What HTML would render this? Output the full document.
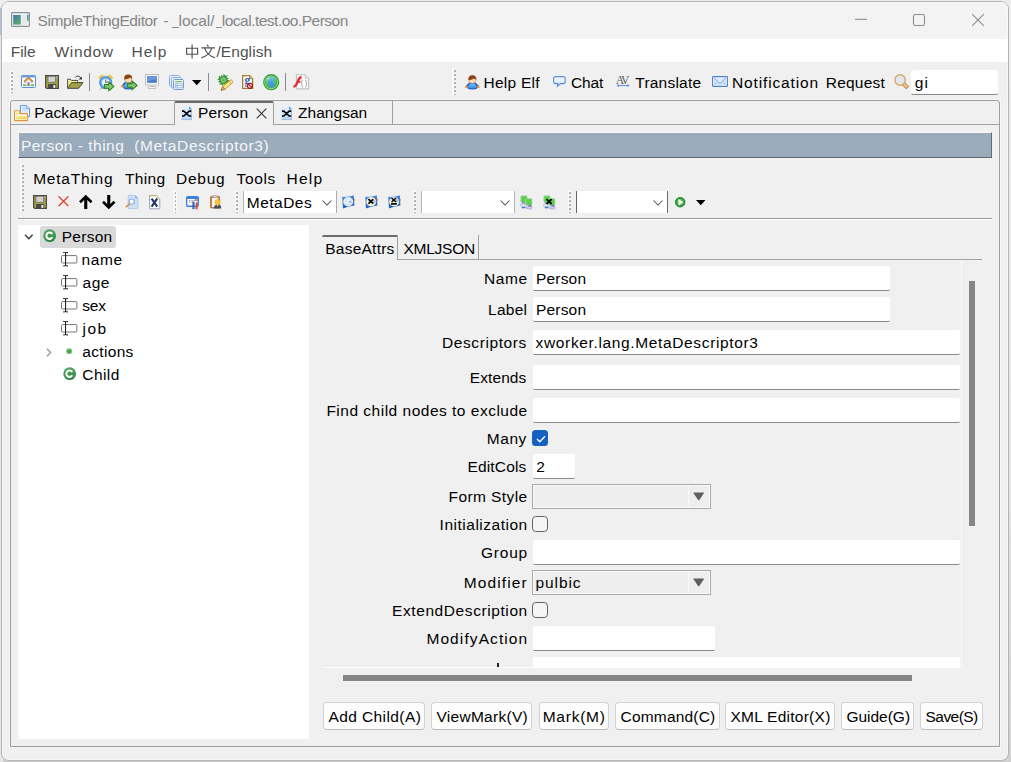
<!DOCTYPE html>
<html><head><meta charset="utf-8"><title>SimpleThingEditor</title>
<style>
html,body{margin:0;padding:0;}
body{width:1011px;height:762px;overflow:hidden;position:relative;background:#fff;font-family:"Liberation Sans",sans-serif;}
div,span.t,svg{position:absolute;box-sizing:border-box;}
span.t{white-space:pre;}
svg{overflow:visible;}
</style></head><body>
<div style="left:0;top:0;width:1011px;height:762px;background:linear-gradient(180deg,#eeeeee 0%,#e6e6e6 60%,#d0d0d0 100%);"></div>
<div style="left:0;top:35px;width:3px;height:727px;background:#e6e6e6;"></div>
<div style="left:0;top:8px;width:2px;height:27px;background:#b2bfe8;"></div>
<div style="left:1px;top:1px;width:1008px;height:760px;background:#f0f0f0;border:1px solid #b4b4b4;border-radius:8px;overflow:hidden;"><div style="left:0;top:0;width:1008px;height:36.7px;background:#f3f3f3;"></div><div style="left:0;top:36.7px;width:1008px;height:23.3px;background:#fff;"></div></div>
<div style="left:2px;top:2px;width:1006px;height:758px;border:1px solid rgba(255,255,255,.45);border-radius:7px;"></div>
<div style="left:172.4px;top:27.3px;width:6.3px;height:1.1px;background:#8c8c8c;"></div>
<div style="left:215.7px;top:27.3px;width:6.2px;height:1.1px;background:#8c8c8c;"></div>
<svg style="left:850px;top:8px" width="140" height="24" viewBox="0 0 140 24" fill="none" stroke="#8c8c8c" stroke-width="1.1"><path d="M5 11.3H17"/><rect x="63.5" y="6.5" width="11" height="11" rx="1.8"/><path d="M122.2 6.2L133.8 17.8M133.8 6.2L122.2 17.8"/></svg>
<div style="left:9.65px;top:71.15px;width:3.2px;height:21.450000000000003px;background:repeating-linear-gradient(180deg,#fcfcfc 0,#fcfcfc 2.8px,transparent 2.8px,transparent 4px);"></div>
<div style="left:11.25px;top:71.75px;width:1.5px;height:21.450000000000003px;background:repeating-linear-gradient(180deg,transparent 0,transparent .3px,#b0b0b0 .4px,#b0b0b0 1.9px,transparent 2px,transparent 4px);"></div>
<div style="left:452.45px;top:69.05000000000001px;width:3.2px;height:25.549999999999997px;background:repeating-linear-gradient(180deg,#fcfcfc 0,#fcfcfc 2.8px,transparent 2.8px,transparent 4px);"></div>
<div style="left:454.04999999999995px;top:69.65px;width:1.5px;height:25.549999999999997px;background:repeating-linear-gradient(180deg,transparent 0,transparent .3px,#b0b0b0 .4px,#b0b0b0 1.9px,transparent 2px,transparent 4px);"></div>
<div style="left:88.9px;top:73px;width:1.2px;height:18px;background:#8c8c8c;"></div>
<div style="left:208px;top:73px;width:1.2px;height:18px;background:#8c8c8c;"></div>
<div style="left:284.9px;top:73px;width:1.2px;height:18px;background:#8c8c8c;"></div>
<div style="left:911px;top:70px;width:87px;height:24.6px;background:#fff;border-bottom:1px solid #868686;border-radius:3px 3px 2px 2px;"></div>
<div style="left:10px;top:100px;width:990px;height:647px;border:1px solid #9e9e9e;border-radius:3px 3px 0 0;box-shadow:0 0 0 1px rgba(255,255,255,.45);"></div>
<div style="left:10px;top:124px;width:990px;height:1px;background:#a0a0a0;"></div>
<div style="left:174px;top:100.5px;width:100px;height:24.5px;background:#f0f0f0;border:1px solid #a0a0a0;border-bottom:none;border-top:2.5px solid #6a6a6a;border-radius:2px 2px 0 0;"></div>
<div style="left:392px;top:101px;width:1px;height:23px;background:#a0a0a0;"></div>
<svg style="left:256px;top:108px" width="11" height="11" viewBox="0 0 11 11" stroke="#333" stroke-width="1.1" fill="none"><path d="M0.7 0.7L10.3 10.3M10.3 0.7L0.7 10.3"/></svg>
<div style="left:18px;top:132px;width:974px;height:26px;background:#9aabbc;border-top:1px solid #f9f9f9;border-left:1px solid #f9f9f9;border-bottom:1.2px solid #60666e;border-right:1px solid #666c74;"></div>
<div style="left:20.45px;top:163.9px;width:3.2px;height:48.5px;background:repeating-linear-gradient(180deg,#fcfcfc 0,#fcfcfc 2.8px,transparent 2.8px,transparent 4px);"></div>
<div style="left:22.049999999999997px;top:164.5px;width:1.5px;height:48.5px;background:repeating-linear-gradient(180deg,transparent 0,transparent .3px,#b0b0b0 .4px,#b0b0b0 1.9px,transparent 2px,transparent 4px);"></div>
<div style="left:173.35000000000002px;top:191.15px;width:3.2px;height:21.25px;background:repeating-linear-gradient(180deg,#fcfcfc 0,#fcfcfc 2.8px,transparent 2.8px,transparent 4px);"></div>
<div style="left:174.95000000000002px;top:191.75px;width:1.5px;height:21.25px;background:repeating-linear-gradient(180deg,transparent 0,transparent .3px,#b0b0b0 .4px,#b0b0b0 1.9px,transparent 2px,transparent 4px);"></div>
<div style="left:234.60000000000002px;top:191.15px;width:3.2px;height:21.25px;background:repeating-linear-gradient(180deg,#fcfcfc 0,#fcfcfc 2.8px,transparent 2.8px,transparent 4px);"></div>
<div style="left:236.20000000000002px;top:191.75px;width:1.5px;height:21.25px;background:repeating-linear-gradient(180deg,transparent 0,transparent .3px,#b0b0b0 .4px,#b0b0b0 1.9px,transparent 2px,transparent 4px);"></div>
<div style="left:412.65000000000003px;top:191.15px;width:3.2px;height:21.25px;background:repeating-linear-gradient(180deg,#fcfcfc 0,#fcfcfc 2.8px,transparent 2.8px,transparent 4px);"></div>
<div style="left:414.25px;top:191.75px;width:1.5px;height:21.25px;background:repeating-linear-gradient(180deg,transparent 0,transparent .3px,#b0b0b0 .4px,#b0b0b0 1.9px,transparent 2px,transparent 4px);"></div>
<div style="left:567.75px;top:191.15px;width:3.2px;height:21.25px;background:repeating-linear-gradient(180deg,#fcfcfc 0,#fcfcfc 2.8px,transparent 2.8px,transparent 4px);"></div>
<div style="left:569.35px;top:191.75px;width:1.5px;height:21.25px;background:repeating-linear-gradient(180deg,transparent 0,transparent .3px,#b0b0b0 .4px,#b0b0b0 1.9px,transparent 2px,transparent 4px);"></div>
<div style="left:243.3px;top:191px;width:93.6px;height:22px;background:#fff;border-left:1px solid #b4b4b4;border-right:1.2px solid #adadad;"></div>
<svg style="left:321.59999999999997px;top:199.6px" width="10" height="6" viewBox="0 0 10 6" fill="none" stroke="#505050" stroke-width="1.05"><path d="M0.5 0.5L5 5L9.5 0.5"/></svg>
<div style="left:421.3px;top:191px;width:93.6px;height:22px;background:#fff;border-left:1px solid #b4b4b4;border-right:1.2px solid #b4b4b4;"></div>
<svg style="left:499.59999999999997px;top:199.6px" width="10" height="6" viewBox="0 0 10 6" fill="none" stroke="#505050" stroke-width="1.05"><path d="M0.5 0.5L5 5L9.5 0.5"/></svg>
<div style="left:575.8px;top:191px;width:92.4px;height:22px;background:#fff;border-left:1px solid #666;border-right:1.2px solid #6a6a6a;"></div>
<svg style="left:652.9px;top:199.6px" width="10" height="6" viewBox="0 0 10 6" fill="none" stroke="#505050" stroke-width="1.05"><path d="M0.5 0.5L5 5L9.5 0.5"/></svg>
<div style="left:18px;top:217.9px;width:974px;height:1.1px;background:#9a9a9a;"></div>
<div style="left:18px;top:219px;width:974px;height:1px;background:#fdfdfd;"></div>
<div style="left:18px;top:225px;width:291px;height:514px;background:#fff;"></div>
<div style="left:39.5px;top:225.5px;width:76px;height:22px;background:#d9d9d9;border-radius:3px;"></div>
<svg style="left:24px;top:234px" width="10" height="6" viewBox="0 0 10 6" fill="none" stroke="#333" stroke-width="1.3"><path d="M1 0.8L4.8 4.8L8.6 0.8"/></svg>
<svg style="left:46px;top:348px" width="6" height="9" viewBox="0 0 6 9" fill="none" stroke="#969696" stroke-width="1.3"><path d="M1 0.8L4.6 4.5L1 8.2"/></svg>
<div style="left:322px;top:259px;width:660px;height:1px;background:#a0a0a0;"></div>
<div style="left:322.4px;top:235.2px;width:76.1px;height:24.8px;background:#f0f0f0;border-top:2.7px solid #6c6c6c;border-right:1px solid #a0a0a0;border-radius:2px 1px 0 0;"></div>
<div style="left:478px;top:235px;width:1px;height:24px;background:#a0a0a0;"></div>
<div style="left:961px;top:260px;width:1px;height:407px;background:#fafafa;"></div>
<div style="left:969px;top:281px;width:6px;height:245px;background:#858585;"></div>
<div style="left:343px;top:675px;width:569px;height:6px;background:#858585;"></div>
<div style="left:533px;top:266px;width:357px;height:24.5px;background:#fff;border-bottom:1px solid #8a8a8a;border-radius:2px;"></div>
<div style="left:533px;top:297px;width:357px;height:24.5px;background:#fff;border-bottom:1px solid #8a8a8a;border-radius:2px;"></div>
<div style="left:533px;top:330px;width:427px;height:25px;background:#fff;border-bottom:1px solid #8a8a8a;border-radius:2px;"></div>
<div style="left:533px;top:365px;width:427px;height:25px;background:#fff;border-bottom:1px solid #8a8a8a;border-radius:2px;"></div>
<div style="left:533px;top:398px;width:427px;height:25px;background:#fff;border-bottom:1px solid #8a8a8a;border-radius:2px;"></div>
<div style="left:532.1px;top:430.3px;width:15.8px;height:15.7px;background:#1560c0;border-radius:3.5px;"></div><svg style="left:535.5px;top:434.5px" width="10" height="8" viewBox="0 0 10 8" fill="none" stroke="#fff" stroke-width="1.3"><path d="M1 4L3.8 6.8L9 1.2"/></svg>
<div style="left:533px;top:453.5px;width:42px;height:25px;background:#fff;border-bottom:1px solid #8a8a8a;border-radius:2px;"></div>
<div style="left:532.3px;top:484px;width:178.6px;height:25px;background:#eeeeee;border:1px solid #a9a9b0;box-shadow:inset 0 0 0 1px #f9f9f9;"></div>
<div style="left:687.9px;top:486px;width:1px;height:21px;background:#f9f9f9;"></div>
<svg style="left:693.1px;top:492.2px" width="11.4" height="8.6" viewBox="0 0 11.4 8.6"><path d="M1 0.4H10.4Q11.4 0.4 10.8 1.3L6.3 8Q5.7 8.7 5.1 8L0.6 1.3Q0 0.4 1 0.4Z" fill="#5e5e5e"/></svg>
<div style="left:532.2px;top:516.0999999999999px;width:15.6px;height:15.8px;background:#f5f5f5;border:1px solid #636363;border-radius:3.8px;"></div>
<div style="left:533px;top:539.5px;width:427px;height:25px;background:#fff;border-bottom:1px solid #8a8a8a;border-radius:2px;"></div>
<div style="left:532.3px;top:570px;width:178.6px;height:25px;background:#eeeeee;border:1px solid #a9a9b0;box-shadow:inset 0 0 0 1px #f9f9f9;"></div>
<div style="left:687.9px;top:572px;width:1px;height:21px;background:#f9f9f9;"></div>
<svg style="left:693.1px;top:578.2px" width="11.4" height="8.6" viewBox="0 0 11.4 8.6"><path d="M1 0.4H10.4Q11.4 0.4 10.8 1.3L6.3 8Q5.7 8.7 5.1 8L0.6 1.3Q0 0.4 1 0.4Z" fill="#5e5e5e"/></svg>
<div style="left:532.2px;top:602.3px;width:15.6px;height:15.8px;background:#f5f5f5;border:1px solid #636363;border-radius:3.8px;"></div>
<div style="left:533px;top:626px;width:182px;height:25px;background:#fff;border-bottom:1px solid #8a8a8a;border-radius:2px;"></div>
<div style="left:533px;top:657px;width:427px;height:11px;background:#fff;"></div>
<div style="left:322px;top:667px;width:211px;height:1px;background:#fcfcfc;"></div>
<div style="left:497.4px;top:663.3px;width:1.5px;height:3.7px;background:#222;"></div>
<div style="left:323.2px;top:702.3px;width:102.10000000000002px;height:27.3px;background:#fdfdfd;border:1px solid #d2d2d2;border-bottom-color:#bcbcbc;border-radius:4px;"></div>
<div style="left:431.2px;top:702.3px;width:101.00000000000006px;height:27.3px;background:#fdfdfd;border:1px solid #d2d2d2;border-bottom-color:#bcbcbc;border-radius:4px;"></div>
<div style="left:538.5px;top:702.3px;width:70.89999999999998px;height:27.3px;background:#fdfdfd;border:1px solid #d2d2d2;border-bottom-color:#bcbcbc;border-radius:4px;"></div>
<div style="left:615.3px;top:702.3px;width:104.40000000000009px;height:27.3px;background:#fdfdfd;border:1px solid #d2d2d2;border-bottom-color:#bcbcbc;border-radius:4px;"></div>
<div style="left:725.3px;top:702.3px;width:110.0px;height:27.3px;background:#fdfdfd;border:1px solid #d2d2d2;border-bottom-color:#bcbcbc;border-radius:4px;"></div>
<div style="left:841.2px;top:702.3px;width:73.29999999999995px;height:27.3px;background:#fdfdfd;border:1px solid #d2d2d2;border-bottom-color:#bcbcbc;border-radius:4px;"></div>
<div style="left:920.4px;top:702.3px;width:62.200000000000045px;height:27.3px;background:#fdfdfd;border:1px solid #d2d2d2;border-bottom-color:#bcbcbc;border-radius:4px;"></div>
<svg style="left:11px;top:12px" width="19" height="15" viewBox="0 0 19 15"><defs><linearGradient id="wi" x1="0" y1="0" x2=".6" y2="1"><stop offset="0" stop-color="#4478a8"/><stop offset="1" stop-color="#56a870"/></linearGradient></defs><rect x="0.6" y="0.6" width="17.8" height="13.8" rx=".8" fill="#f2f2f2" stroke="#8c929a" stroke-width="1.2"/><rect x="2.2" y="3" width="7.6" height="9.6" fill="url(#wi)"/><rect x="10.6" y="3" width="5.2" height="9.6" fill="#e8e8e8"/><rect x="16" y="2.6" width="1.5" height="6" fill="#4a8ad0"/><rect x="16" y="6" width="1.5" height="2.8" fill="#5ab868"/></svg>
<svg style="left:185.4px;top:43.6px" width="31" height="15" viewBox="0 0 31 15"><g fill="none" stroke="#505050" stroke-width="1.15"><path d="M1.6 4.2H12.6V10.2H1.6ZM7.1 0.6V14.4"/><path d="M22.2 0.6L23.4 2.8M16.4 3.8H30M19.6 3.8C20.8 8.2 24.6 12 30.2 13.8M26.8 3.8C25.8 8.4 21.8 12 16.2 13.8"/></g></svg>
<svg style="left:21px;top:75px" width="15" height="13" viewBox="0 0 15 13"><rect x="0.5" y="0.5" width="14" height="12" rx="1" fill="#fff" stroke="#5b8fd8"/><rect x="0.5" y="0.5" width="14" height="2" fill="#6b9ee4"/><rect x="2" y="9.3" width="11" height="1.8" fill="#58b848"/><path d="M4.6 10.5V6.4L7.5 3.6L10.4 6.4V10.5Z" fill="#eeeeee" stroke="#b8b8b8" stroke-width=".5"/><rect x="6.5" y="7.4" width="2" height="3.2" fill="#7c7c7c"/><path d="M3 7L7.5 2.6L12 7" fill="none" stroke="#c68a4a" stroke-width="1.9" stroke-linejoin="round"/></svg>
<svg style="left:45.1px;top:75px" width="14" height="14" viewBox="0 0 14 14"><path d="M0.6 0.6H13.4V13.4H1.8L0.6 12.4Z" fill="#a3a346" stroke="#474747" stroke-width="1.2"/><rect x="3" y="1.2" width="7.6" height="6" fill="#d4d0d4" stroke="#5a5a5a" stroke-width=".6"/><rect x="3.2" y="9" width="8" height="4.4" fill="#484848"/><rect x="8.4" y="10" width="1.9" height="2.9" fill="#f4f4f4"/><rect x="11.6" y="1.5" width="1" height="1" fill="#e8e8e8"/></svg>
<svg style="left:66.6px;top:75.2px" width="17" height="14" viewBox="0 0 17 14"><path d="M0.6 13.2V4.2H3.4L4.4 5.4H10.6V7.2" fill="#f4f46a" stroke="#4a4a4a" stroke-width="1"/><path d="M1 5h2v1h-2zM3 6h2v1h-2zM5 6h2v1h2v-1h1.2v1.3h-5.2z" fill="#ffffc8"/><path d="M0.7 13.3L4.6 7.6H16L11.6 13.3Z" fill="#a3a346" stroke="#454545" stroke-width="1"/><path d="M8.2 2.6C10 0.2 12.8 0.8 14 3.6" fill="none" stroke="#333" stroke-width="1"/><path d="M14.8 1.4V4.6H11.6Z" fill="#333"/></svg>
<svg style="left:97.7px;top:73.9px" width="17" height="17" viewBox="0 0 17 17"><ellipse cx="3" cy="2.8" rx="3" ry="1.7" transform="rotate(-35 3 2.8)" fill="#f2c74e"/><ellipse cx="12.4" cy="2.8" rx="3" ry="1.7" transform="rotate(35 12.4 2.8)" fill="#f2c74e"/><path d="M2.4 15.4L4 13.6M13 15.4L11.6 13.6" stroke="#8a8a8a" stroke-width="1"/><circle cx="7.7" cy="8.6" r="6.6" fill="#4a8fd8"/><circle cx="7.7" cy="8.6" r="5.1" fill="#7db6ec"/><circle cx="7.7" cy="8.6" r="3.7" fill="#eef3fb"/><path d="M7.7 5.6V8.8L10 7.6" fill="none" stroke="#666" stroke-width="1"/><path transform="translate(6.4,8)" d="M0 2.6H4.4V0L9.6 4.4L4.4 8.8V6.2H0Z" fill="#86c474" stroke="#2c8420" stroke-width="1.1" stroke-linejoin="round"/></svg>
<svg style="left:120.6px;top:74.4px" width="17" height="16" viewBox="0 0 17 16"><defs><linearGradient id="ua" x1="0" y1="0" x2="0" y2="1"><stop offset="0" stop-color="#6cc4ff"/><stop offset="1" stop-color="#2f86f2"/></linearGradient></defs><path d="M4.8 8.4L1.4 11.8" stroke="#1c4cb8" stroke-width="1.5" fill="none"/><path d="M4.2 8.8H10.2L12.1 11.8Q12.2 14.9 9.6 14.9H4.8Q2.2 14.9 2.3 11.8Z" fill="url(#ua)" stroke="#1c4cb8" stroke-width=".9"/><circle cx="1.5" cy="12.2" r="1.3" fill="#f08c2c"/><circle cx="7.2" cy="4.9" r="3.8" fill="#f8dcc0" stroke="#b8784a" stroke-width=".5"/><path d="M3.3 5.4C2.8 1.7 5.1 0.4 7.2 0.4S11.6 1.7 11.1 5.4C10.4 4.2 9.4 3.7 8.5 3.9C7.2 5 4.8 4.8 3.3 5.4Z" fill="#8a4414"/><path transform="translate(6.6,7)" d="M0 2.6H4.4V0L9.6 4.4L4.4 8.8V6.2H0Z" fill="#86c474" stroke="#2c8420" stroke-width="1.1" stroke-linejoin="round"/></svg>
<svg style="left:145px;top:74px" width="14" height="15" viewBox="0 0 14 15"><rect x="0.5" y="0.5" width="13" height="10.4" fill="#ececec" stroke="#bcbcbc"/><rect x="2.2" y="2.2" width="9.6" height="6.6" fill="#4a7cc4"/><path d="M2.2 2.2H11.8V5L2.2 7.6Z" fill="#6b98d8"/><rect x="1.4" y="1.4" width="11.2" height="8.6" fill="none" stroke="#fafafa" stroke-width=".8"/><rect x="5.2" y="11" width="3.6" height="1.7" fill="#cfcfcf"/><rect x="3.2" y="12.5" width="7.6" height="2" rx=".6" fill="#fafafa" stroke="#a8a8a8" stroke-width=".7"/></svg>
<svg style="left:169px;top:75px" width="15" height="15" viewBox="0 0 15 15"><rect x="0.5" y="0.5" width="10" height="10.4" rx="1" fill="#eef4fc" stroke="#86abdf"/><rect x="2.5" y="2.5" width="10" height="10.4" rx="1" fill="#eef4fc" stroke="#86abdf"/><rect x="4.5" y="4.5" width="10" height="10" rx="1" fill="#fff" stroke="#6d99d6"/><rect x="6" y="6" width="7" height="1.1" fill="#6cbf5c"/><path d="M6.2 8.3H13V12.9H6.2ZM6.2 10.6H13M8.2 8.3V12.9" fill="none" stroke="#8fb2e4" stroke-width=".9"/></svg>
<svg style="left:191.7px;top:79.7px" width="9.5" height="5.3" viewBox="0 0 9.5 5.3"><path d="M0 0H9.5L4.75 5.3Z" fill="#000"/></svg>
<svg style="left:216.6px;top:74px" width="17" height="16" viewBox="0 0 17 16"><g transform="translate(0.9,0.5) scale(.86) rotate(-22 6.4 6.4)"><path d="M3.6 0.2V12.6M6.4 0V12.8M9.2 0.2V12.6M0.2 3.6H12.6M0 6.4H12.8M0.2 9.2H12.6" stroke="#33a030" stroke-width="1.2"/><rect x="2.2" y="2.2" width="8.4" height="8.4" rx="1.2" fill="#3f9c3c" stroke="#2c862c" stroke-width=".7"/><circle cx="6.4" cy="6.4" r="2.7" fill="#7cbc6c" stroke="#a8d898" stroke-width=".7"/><circle cx="6.4" cy="6.4" r="1.1" fill="#5aa850"/></g><g transform="rotate(-41 10.6 10.6)"><rect x="5.4" y="8.9" width="9.6" height="3.5" fill="#f7e25e" stroke="#dc9240" stroke-width=".9"/><path d="M5.8 10.65H14.6" stroke="#fbf0a0" stroke-width="1"/><rect x="13.8" y="8.9" width="2.8" height="3.5" rx="1.2" fill="#fbe6d4" stroke="#dc9240" stroke-width=".9"/><path d="M5.4 8.9L2 10.65L5.4 12.4Z" fill="#f0c48c" stroke="#b06a28" stroke-width=".8"/><path d="M2 10.65L3.3 10V11.3Z" fill="#4a2c10"/></g></svg>
<svg style="left:241.6px;top:75px" width="12" height="14" viewBox="0 0 12 14"><path d="M0.7 0.7H7.6L10.6 3.7V13.3H0.7Z" fill="#fff" stroke="#a07c2c" stroke-width="1.3"/><path d="M7.6 0.7V3.7H10.6" fill="#e8d8a8" stroke="#a07c2c" stroke-width=".8"/><text x="2.4" y="9.4" font-family="Liberation Serif" font-weight="700" font-size="11.5" fill="#2b62b8">g</text><circle cx="8" cy="10.8" r="2.5" fill="#fff" stroke="#a81010" stroke-width="1.15"/><path d="M6.3 9.1L9.7 12.5" stroke="#a81010" stroke-width="1.1"/></svg>
<svg style="left:262.8px;top:73.7px" width="16.4" height="16.4" viewBox="0 0 16.4 16.4"><defs><radialGradient id="gl" cx=".4" cy=".3" r=".8"><stop offset="0" stop-color="#9ae8a4"/><stop offset=".5" stop-color="#4fcf66"/><stop offset="1" stop-color="#2fa446"/></radialGradient><linearGradient id="gl2" x1="0" y1="0" x2="0" y2="1"><stop offset="0" stop-color="#8cc8ee"/><stop offset=".5" stop-color="#4a9ade"/><stop offset="1" stop-color="#4a94d8"/></linearGradient></defs><circle cx="8.2" cy="8.2" r="8.1" fill="#38a03c"/><circle cx="8.2" cy="8.2" r="6.8" fill="#a8e09a"/><circle cx="8.2" cy="8.2" r="6.1" fill="#44aa4a"/><circle cx="8.2" cy="8.2" r="5.7" fill="url(#gl)"/><path d="M8.8 2.5C6.2 3.2 4.4 5.4 4.6 7.8C4.8 10.4 6.6 12.4 8.2 13.9C10.8 13.6 12.2 11.4 11.6 9.4C10.4 8.8 9.8 7.4 11.4 6.4C12.4 5.6 11.4 3 8.8 2.5Z" fill="url(#gl2)"/><path d="M4 4.6C5 3.4 6.4 2.8 7.4 2.8C6.4 3.8 5.4 5 5 6.4C4.4 6 4 5.4 4 4.6Z" fill="#c4f0d0" opacity=".7"/></svg>
<svg style="left:293.4px;top:74px" width="17" height="16" viewBox="0 0 17 16"><path d="M3.4 0.7H12L15.6 4.3V14.9H3.4Z" fill="#fdfdfd" stroke="#c2c2c2" stroke-width="1.1"/><path d="M12 0.7V4.3H15.6" fill="#eee" stroke="#c2c2c2" stroke-width=".8"/><path d="M10 6.2Q8.8 6.2 8.8 7.4V8.6Q8.8 9.6 7.9 9.6Q8.8 9.6 8.8 10.6V11.8Q8.8 13 10 13M12.2 6.2Q13.4 6.2 13.4 7.4V8.6Q13.4 9.6 14.3 9.6Q13.4 9.6 13.4 10.6V11.8Q13.4 13 12.2 13" fill="none" stroke="#a4a4a4" stroke-width="1"/><path d="M8.6 3C5.4 3.4 5.2 7 3.8 9.8C3 11.6 1.8 12.6 0.4 12.6" fill="none" stroke="#f02a32" stroke-width="2.3"/><path d="M4.2 8H7.4" stroke="#f02a32" stroke-width="1.8"/></svg>
<svg style="left:464.6px;top:75px" width="15" height="15" viewBox="0 0 15 15"><defs><linearGradient id="he" x1="0" y1="0" x2="0" y2="1"><stop offset="0" stop-color="#6cc4ff"/><stop offset="1" stop-color="#2f86f2"/></linearGradient></defs><path d="M5 8L1.5 11.4M9.8 8L13.3 11.4" stroke="#1c4cb8" stroke-width="1.5" fill="none"/><path d="M4.4 8.4H10.4L12.3 11.4Q12.4 13.9 9.8 13.9H5Q2.4 13.9 2.5 11.4Z" fill="url(#he)" stroke="#1c4cb8" stroke-width=".9"/><circle cx="1.5" cy="11.9" r="1.3" fill="#f08c2c"/><circle cx="13.3" cy="11.9" r="1.3" fill="#f08c2c"/><circle cx="7.4" cy="4.7" r="3.8" fill="#f8dcc0" stroke="#b8784a" stroke-width=".5"/><path d="M3.5 5.2C3 1.5 5.3 0.2 7.4 0.2S11.8 1.5 11.3 5.2C10.6 4 9.6 3.5 8.7 3.7C7.4 4.8 5 4.6 3.5 5.2Z" fill="#8a4414"/></svg>
<svg style="left:552.6px;top:75.6px" width="13" height="11.5" viewBox="0 0 13 11.5"><defs><linearGradient id="cb" x1="0" y1="0" x2="0" y2="1"><stop offset="0" stop-color="#f4f8ff"/><stop offset="1" stop-color="#cfe0fa"/></linearGradient></defs><path d="M2.6 0.6H10.2Q12.2 0.6 12.2 2.6V5.6Q12.2 7.6 10.2 7.6H7.4L4.2 10.6L5 7.6H2.6Q0.6 7.6 0.6 5.6V2.6Q0.6 0.6 2.6 0.6Z" fill="url(#cb)" stroke="#5a8ed2" stroke-width="1.1" stroke-linejoin="round"/></svg>
<svg style="left:616px;top:76px" width="14" height="11.5" viewBox="0 0 14 11.5"><text x="-0.2" y="7.6" font-family="Liberation Serif" font-size="11.6" fill="#5c5c5c" letter-spacing="-1.6">AV</text><path d="M1.4 9.6H12.6" stroke="#5a90e0" stroke-width="1"/><path d="M0.6 9.6L2.8 8V11.2ZM13.6 9.6L11.4 8V11.2Z" fill="#5a90e0"/></svg>
<svg style="left:712px;top:76px" width="16" height="11" viewBox="0 0 16 11"><rect x="0.6" y="0.6" width="14.8" height="9.8" rx=".6" fill="#fff" stroke="#4a7ec8" stroke-width="1.1"/><rect x="1.9" y="1.9" width="12.2" height="7.2" fill="#cfe0f8"/><path d="M2.2 2.2L8 7.4L13.8 2.2" fill="#e4eefc" stroke="#7ea4dc" stroke-width="1"/><path d="M2.2 8.8L5.8 5.6M13.8 8.8L10.2 5.6" stroke="#a8c4ec" stroke-width=".8"/></svg>
<svg style="left:894px;top:74px" width="16" height="16" viewBox="0 0 16 16"><path d="M8.4 8.6L13.6 13.8" stroke="#c07a3c" stroke-width="4" stroke-linecap="butt"/><path d="M8.8 9L13 13.2" stroke="#ecd08a" stroke-width="2.2"/><circle cx="6.1" cy="6" r="5.2" fill="#e0e7f1" stroke="#d9a862" stroke-width="1.4"/></svg>
<svg style="left:14px;top:104.8px" width="16.4" height="16.4" viewBox="0 0 16.4 16.4"><defs><linearGradient id="fp1" x1="0" y1="0" x2="0" y2="1"><stop offset="0" stop-color="#bcd6f6"/><stop offset="1" stop-color="#eef5fd"/></linearGradient><linearGradient id="fp2" x1="0" y1="0" x2="1" y2="1"><stop offset="0" stop-color="#fbeeb0"/><stop offset="1" stop-color="#f3cd3c"/></linearGradient></defs><path d="M6.5 0.6H12.8L15.5 3.3V11.6H6.5Z" fill="#fff" stroke="#5a90dc" stroke-width="1"/><path d="M7.8 2H12L14.2 4.2V10.4H7.8Z" fill="url(#fp1)"/><path d="M12.4 0.8V3.6H15.2" fill="#e8f0fc" stroke="#6a9ce0" stroke-width=".7"/><path d="M0.55 5.7H5.9V8.6H13.4V15.6H0.55Z" fill="#fffdf4" stroke="#e0963c" stroke-width="1.1" stroke-linejoin="round"/><path d="M2.2 7.4H5C5 8.8 4.2 9.6 2.2 9.6Z" fill="#f6d870"/><rect x="2" y="10.8" width="10" height="3.6" fill="url(#fp2)"/></svg>
<svg style="left:180.6px;top:106px" width="11.5" height="14" viewBox="0 0 11.5 14"><defs><linearGradient id="xp" x1="0" y1="0" x2="0" y2="1"><stop offset="0" stop-color="#eaf2fd"/><stop offset=".5" stop-color="#cfe2fa"/><stop offset="1" stop-color="#b4d6f8"/></linearGradient></defs><path d="M0.4 0.2H8L11 3.2V13.8H0.4Z" fill="url(#xp)"/><path d="M10.5 3.2V13.6H0.6" fill="none" stroke="#8fa2d0" stroke-width=".8" opacity=".8"/><path d="M8 0.2V3.2H11Z" fill="#4a92e4"/><path d="M1 5.1H2.8L8.2 10H10.2M1 10H2.8L8.2 5.1H10.2" fill="none" stroke="#000" stroke-width="1.65" stroke-linejoin="round"/></svg>
<svg style="left:280.5px;top:106px" width="11.5" height="14" viewBox="0 0 11.5 14"><defs><linearGradient id="xp" x1="0" y1="0" x2="0" y2="1"><stop offset="0" stop-color="#eaf2fd"/><stop offset=".5" stop-color="#cfe2fa"/><stop offset="1" stop-color="#b4d6f8"/></linearGradient></defs><path d="M0.4 0.2H8L11 3.2V13.8H0.4Z" fill="url(#xp)"/><path d="M10.5 3.2V13.6H0.6" fill="none" stroke="#8fa2d0" stroke-width=".8" opacity=".8"/><path d="M8 0.2V3.2H11Z" fill="#4a92e4"/><path d="M1 5.1H2.8L8.2 10H10.2M1 10H2.8L8.2 5.1H10.2" fill="none" stroke="#000" stroke-width="1.65" stroke-linejoin="round"/></svg>
<svg style="left:33px;top:195px" width="14" height="14" viewBox="0 0 14 14"><path d="M0.6 0.6H13.4V13.4H1.8L0.6 12.4Z" fill="#a3a346" stroke="#474747" stroke-width="1.2"/><rect x="3" y="1.2" width="7.6" height="6" fill="#d4d0d4" stroke="#5a5a5a" stroke-width=".6"/><rect x="3.2" y="9" width="8" height="4.4" fill="#484848"/><rect x="8.4" y="10" width="1.9" height="2.9" fill="#f4f4f4"/><rect x="11.6" y="1.5" width="1" height="1" fill="#e8e8e8"/></svg>
<svg style="left:57.6px;top:196.4px" width="11" height="10.5" viewBox="0 0 11 10.5"><path d="M0.6 0.4L10.4 10.1M10.4 0.4L0.6 10.1" stroke="#e22c10" stroke-width="1.25" fill="none"/></svg>
<svg style="left:78.9px;top:195px" width="13.5" height="14" viewBox="0 0 13.5 14"><g><path d="M6.75 14V2.4" stroke="#000" stroke-width="3.1"/><path d="M1 7.2L6.75 1.6L12.5 7.2" fill="none" stroke="#000" stroke-width="2.6"/></g></svg>
<svg style="left:101.7px;top:195px" width="13.5" height="14" viewBox="0 0 13.5 14"><g transform="rotate(180 6.75 7)"><path d="M6.75 14V2.4" stroke="#000" stroke-width="3.1"/><path d="M1 7.2L6.75 1.6L12.5 7.2" fill="none" stroke="#000" stroke-width="2.6"/></g></svg>
<svg style="left:125px;top:195px" width="13.5" height="14" viewBox="0 0 13.5 14"><path d="M3.2 0.4H10.2L13 3.2V13.6H3.2Z" fill="#cfe0f6" stroke="#a8c4ec" stroke-width=".8"/><path d="M10.2 0.4V3.2H13Z" fill="#7ea6e0"/><path d="M4.8 8.6L0.8 12.2" stroke="#e88a30" stroke-width="1.6"/><circle cx="6.7" cy="6.6" r="2.6" fill="#fbfdff" stroke="#8ab0e4" stroke-width="1.1"/></svg>
<svg style="left:148.8px;top:194.8px" width="11.5" height="14.4" viewBox="0 0 11.5 14.4"><path d="M0.6 0.6H7.4L10.8 4V13.8H0.6Z" fill="#fdfdfd" stroke="#9aa4bc" stroke-width="1"/><path d="M0.6 0.6H7.4L10.8 4" fill="none" stroke="#c4ae70" stroke-width="1"/><path d="M7.4 0.6V4H10.8Z" fill="#ecd9a0"/><path d="M2.6 3.6L8.2 11.6M8.2 3.6L2.6 11.6" stroke="#1e3766" stroke-width="2.1" fill="none"/></svg>
<svg style="left:186.4px;top:195.6px" width="14" height="13.5" viewBox="0 0 14 13.5"><rect x="0.7" y="0.7" width="11.6" height="9.6" rx="1.4" fill="#fff" stroke="#3a80e2" stroke-width="1.4"/><rect x="0.7" y="0.7" width="11.6" height="2.2" rx="1" fill="#3a80e2"/><path d="M3 4.6H10.6M3 6.2H8" stroke="#8a8a8a" stroke-width=".9" stroke-dasharray="1 .6"/><rect x="6.4" y="5.6" width="2.1" height="7.6" fill="#2f62c0"/><rect x="9.6" y="6.4" width="2.1" height="6.8" fill="#e0482c"/><path d="M8.6 4H13" stroke="#777" stroke-width="1.3"/></svg>
<svg style="left:209.8px;top:194.8px" width="11.5" height="13.5" viewBox="0 0 11.5 13.5"><rect x="0.6" y="1.4" width="9" height="11.6" rx=".8" fill="#c8803a" stroke="#a8642a" stroke-width=".8"/><rect x="2" y="2.8" width="6.2" height="9.2" fill="#f4f6fa"/><rect x="3" y="0.4" width="4.2" height="2" rx=".6" fill="#d8d8d8" stroke="#9a9a9a" stroke-width=".6"/><path d="M4 13.4C4 10.6 5.6 9.6 7.6 9.6S11.2 10.6 11.2 13.4Z" fill="#4a4a52"/><path d="M6.8 9.8L7.6 12L8.4 9.8Z" fill="#f4f4f4"/><circle cx="7.6" cy="7.2" r="2.7" fill="#f8c83a" stroke="#e0a020" stroke-width=".5"/></svg>
<svg style="left:341.8px;top:195.4px" width="13" height="13.5" viewBox="0 0 13 13.5"><defs><linearGradient id="bq" x1="0" y1="0" x2=".3" y2="1"><stop offset="0" stop-color="#4a90ea"/><stop offset="1" stop-color="#1c5cc4"/></linearGradient></defs><path d="M0.2 1.8C4 2.2 8 1.4 11.8 0.2L12.4 10.4C8.6 11 4.6 11.8 1 13.4Z" fill="url(#bq)"/><ellipse cx="6.2" cy="6.7" rx="5" ry="4.7" fill="#f8f2d0"/><rect x="11.4" y="4.3" width="1.7" height="1.3" fill="#f0642a"/><path d="M3.8 2.6H8L9.8 4.4V9.6H3.8Z" fill="#e4f0fd" stroke="#b4d0f4" stroke-width=".6"/><circle cx="8.2" cy="6.8" r="1.1" fill="#86ace0"/></svg>
<svg style="left:364.8px;top:195.4px" width="13" height="13.5" viewBox="0 0 13 13.5"><defs><linearGradient id="bq" x1="0" y1="0" x2=".3" y2="1"><stop offset="0" stop-color="#4a90ea"/><stop offset="1" stop-color="#1c5cc4"/></linearGradient></defs><path d="M0.2 1.8C4 2.2 8 1.4 11.8 0.2L12.4 10.4C8.6 11 4.6 11.8 1 13.4Z" fill="url(#bq)"/><ellipse cx="6.2" cy="6.7" rx="5" ry="4.7" fill="#f8f2d0"/><rect x="11.4" y="4.3" width="1.7" height="1.3" fill="#f0642a"/><circle cx="9" cy="6.4" r="1.7" fill="#9cc4f0"/><path d="M3.4 4.2L8.2 8.6M8.2 4.2L3.4 8.6" stroke="#000" stroke-width="1.6"/></svg>
<svg style="left:387.7px;top:195.4px" width="13" height="13.5" viewBox="0 0 13 13.5"><defs><linearGradient id="bq" x1="0" y1="0" x2=".3" y2="1"><stop offset="0" stop-color="#4a90ea"/><stop offset="1" stop-color="#1c5cc4"/></linearGradient></defs><path d="M0.2 1.8C4 2.2 8 1.4 11.8 0.2L12.4 10.4C8.6 11 4.6 11.8 1 13.4Z" fill="url(#bq)"/><ellipse cx="6.2" cy="6.7" rx="5" ry="4.7" fill="#f8f2d0"/><rect x="11.4" y="4.3" width="1.7" height="1.3" fill="#f0642a"/><circle cx="9" cy="5.8" r="1.7" fill="#9cc4f0"/><path d="M3.6 3L8 7M8 3L3.6 7" stroke="#000" stroke-width="1.5"/><path d="M3 8.9H8.8" stroke="#000" stroke-width="1.7"/></svg>
<svg style="left:520px;top:195px" width="12.5" height="14" viewBox="0 0 12.5 14"><rect x="0.8" y="0.8" width="6.4" height="6.8" rx="1" fill="#55d640" stroke="#c4c8dc" stroke-width=".8"/><rect x="2" y="7.4" width="3.6" height="2.4" fill="#8088c8"/><ellipse cx="3.4" cy="10.2" rx="3.2" ry="1.4" fill="#ececf4" stroke="#9098c8" stroke-width=".6"/><rect x="5.8" y="3.6" width="6.2" height="6.8" rx="1" fill="#55d640" stroke="#c4c8dc" stroke-width=".8"/><rect x="8.4" y="10" width="3" height="2.4" fill="#7078c4"/><ellipse cx="9.2" cy="12.8" rx="3.2" ry="1.2" fill="#d8d8ec" stroke="#8890c4" stroke-width=".6"/><path d="M1.8 12.6H5.4" stroke="#3a7ad0" stroke-width="1.3"/></svg>
<svg style="left:543px;top:195px" width="12.5" height="14" viewBox="0 0 12.5 14"><rect x="0.8" y="0.8" width="6.4" height="6.8" rx="1" fill="#55d640" stroke="#c4c8dc" stroke-width=".8"/><rect x="2" y="7.4" width="3.6" height="2.4" fill="#8088c8"/><ellipse cx="3.4" cy="10.2" rx="3.2" ry="1.4" fill="#ececf4" stroke="#9098c8" stroke-width=".6"/><rect x="5.8" y="3.6" width="6.2" height="6.8" rx="1" fill="#55d640" stroke="#c4c8dc" stroke-width=".8"/><rect x="8.4" y="10" width="3" height="2.4" fill="#7078c4"/><ellipse cx="9.2" cy="12.8" rx="3.2" ry="1.2" fill="#d8d8ec" stroke="#8890c4" stroke-width=".6"/><path d="M1.8 12.6H5.4" stroke="#3a7ad0" stroke-width="1.3"/><path d="M3.6 4.2L8.6 9M8.6 4.2L3.6 9" stroke="#000" stroke-width="1.8"/></svg>
<svg style="left:674.8px;top:196.8px" width="10.4" height="10.4" viewBox="0 0 10.4 10.4"><circle cx="5.2" cy="5.2" r="4.8" fill="#278a30" stroke="#1c7a26" stroke-width=".8"/><circle cx="5.2" cy="5.2" r="3.6" fill="#5cb85a"/><path d="M3.5 2.1L8.3 5.2L3.5 8.3Z" fill="#f6fff0"/></svg>
<svg style="left:695.8px;top:199.7px" width="9.5" height="5.3" viewBox="0 0 9.5 5.3"><path d="M0 0H9.5L4.75 5.3Z" fill="#000"/></svg>
<svg style="left:42.9px;top:228.8px" width="13.4" height="13.4" viewBox="0 0 13.4 13.4"><defs><linearGradient id="gc" x1="0" y1="0" x2="0" y2="1"><stop offset="0" stop-color="#4fa262"/><stop offset="1" stop-color="#2f8a44"/></linearGradient></defs><circle cx="6.7" cy="6.7" r="6.4" fill="url(#gc)"/><path d="M9.3 5.1A3.2 3.2 0 1 0 9.3 8.3" fill="none" stroke="#fff" stroke-width="2.1"/></svg>
<svg style="left:62.7px;top:367px" width="13.4" height="13.4" viewBox="0 0 13.4 13.4"><defs><linearGradient id="gc" x1="0" y1="0" x2="0" y2="1"><stop offset="0" stop-color="#4fa262"/><stop offset="1" stop-color="#2f8a44"/></linearGradient></defs><circle cx="6.7" cy="6.7" r="6.4" fill="url(#gc)"/><path d="M9.3 5.1A3.2 3.2 0 1 0 9.3 8.3" fill="none" stroke="#fff" stroke-width="2.1"/></svg>
<svg style="left:60.8px;top:251.6px" width="16.5" height="14.4" viewBox="0 0 16.5 14.4"><rect x="0.5" y="3.6" width="15.4" height="7.4" rx=".8" fill="#fff" stroke="#767676" stroke-width="1"/><path d="M4.6 0.5V13.9M2.2 0.5H3.6Q4.6 0.5 4.6 1.4Q4.6 0.5 5.6 0.5H7M2.2 13.9H3.6Q4.6 13.9 4.6 13Q4.6 13.9 5.6 13.9H7" fill="none" stroke="#111" stroke-width="1"/></svg>
<svg style="left:60.8px;top:274.6px" width="16.5" height="14.4" viewBox="0 0 16.5 14.4"><rect x="0.5" y="3.6" width="15.4" height="7.4" rx=".8" fill="#fff" stroke="#767676" stroke-width="1"/><path d="M4.6 0.5V13.9M2.2 0.5H3.6Q4.6 0.5 4.6 1.4Q4.6 0.5 5.6 0.5H7M2.2 13.9H3.6Q4.6 13.9 4.6 13Q4.6 13.9 5.6 13.9H7" fill="none" stroke="#111" stroke-width="1"/></svg>
<svg style="left:60.8px;top:297.6px" width="16.5" height="14.4" viewBox="0 0 16.5 14.4"><rect x="0.5" y="3.6" width="15.4" height="7.4" rx=".8" fill="#fff" stroke="#767676" stroke-width="1"/><path d="M4.6 0.5V13.9M2.2 0.5H3.6Q4.6 0.5 4.6 1.4Q4.6 0.5 5.6 0.5H7M2.2 13.9H3.6Q4.6 13.9 4.6 13Q4.6 13.9 5.6 13.9H7" fill="none" stroke="#111" stroke-width="1"/></svg>
<svg style="left:60.8px;top:320.6px" width="16.5" height="14.4" viewBox="0 0 16.5 14.4"><rect x="0.5" y="3.6" width="15.4" height="7.4" rx=".8" fill="#fff" stroke="#767676" stroke-width="1"/><path d="M4.6 0.5V13.9M2.2 0.5H3.6Q4.6 0.5 4.6 1.4Q4.6 0.5 5.6 0.5H7M2.2 13.9H3.6Q4.6 13.9 4.6 13Q4.6 13.9 5.6 13.9H7" fill="none" stroke="#111" stroke-width="1"/></svg>
<svg style="left:65.8px;top:348px" width="6.4" height="6.4" viewBox="0 0 6.4 6.4"><circle cx="3.2" cy="3.2" r="3" fill="#7cc078"/><circle cx="3.2" cy="3.2" r="1.7" fill="#4e9c50"/></svg>
<span class="t" style="left:37.50px;top:12.68px;font-size:15.5px;line-height:15.5px;letter-spacing:-0.386px;color:#858585;">SimpleThingEditor</span>
<span class="t" style="left:163.40px;top:12.68px;font-size:15.5px;line-height:15.5px;letter-spacing:0.500px;color:#858585;">-</span>
<span class="t" style="left:178.60px;top:12.68px;font-size:15.5px;line-height:15.5px;letter-spacing:-0.056px;color:#858585;">local/</span>
<span class="t" style="left:221.80px;top:12.68px;font-size:15.5px;line-height:15.5px;letter-spacing:-0.506px;color:#858585;">local.test.oo.Person</span>
<span class="t" style="left:10.80px;top:43.58px;font-size:15.5px;line-height:15.5px;letter-spacing:-0.052px;color:#505050;">File</span>
<span class="t" style="left:54.50px;top:43.58px;font-size:15.5px;line-height:15.5px;letter-spacing:0.653px;color:#505050;">Window</span>
<span class="t" style="left:131.50px;top:43.58px;font-size:15.5px;line-height:15.5px;letter-spacing:0.981px;color:#505050;">Help</span>
<span class="t" style="left:216.40px;top:43.58px;font-size:15.5px;line-height:15.5px;letter-spacing:0.082px;color:#505050;">/English</span>
<span class="t" style="left:483.50px;top:74.68px;font-size:15.5px;line-height:15.5px;letter-spacing:0.262px;color:#000;">Help Elf</span>
<span class="t" style="left:571.00px;top:74.68px;font-size:15.5px;line-height:15.5px;letter-spacing:-0.145px;color:#000;">Chat</span>
<span class="t" style="left:635.30px;top:74.68px;font-size:15.5px;line-height:15.5px;letter-spacing:0.211px;color:#000;">Translate</span>
<span class="t" style="left:732.00px;top:74.68px;font-size:15.5px;line-height:15.5px;letter-spacing:0.859px;color:#000;">Notification</span>
<span class="t" style="left:825.80px;top:74.68px;font-size:15.5px;line-height:15.5px;letter-spacing:0.212px;color:#000;">Request</span>
<span class="t" style="left:914.70px;top:74.68px;font-size:15.5px;line-height:15.5px;letter-spacing:1.080px;color:#000;">gi</span>
<span class="t" style="left:34.20px;top:105.48px;font-size:15.5px;line-height:15.5px;letter-spacing:0.157px;color:#000;">Package Viewer</span>
<span class="t" style="left:197.90px;top:105.48px;font-size:15.5px;line-height:15.5px;letter-spacing:0.202px;color:#000;">Person</span>
<span class="t" style="left:298.00px;top:105.48px;font-size:15.5px;line-height:15.5px;letter-spacing:0.040px;color:#000;">Zhangsan</span>
<span class="t" style="left:20.90px;top:137.88px;font-size:15.5px;line-height:15.5px;letter-spacing:0.494px;color:#f4f6f8;">Person - thing</span>
<span class="t" style="left:134.20px;top:137.88px;font-size:15.5px;line-height:15.5px;letter-spacing:0.652px;color:#f4f6f8;">(MetaDescriptor3)</span>
<span class="t" style="left:33.20px;top:171.08px;font-size:15.5px;line-height:15.5px;letter-spacing:0.774px;color:#000;">MetaThing</span>
<span class="t" style="left:125.00px;top:171.08px;font-size:15.5px;line-height:15.5px;letter-spacing:0.337px;color:#000;">Thing</span>
<span class="t" style="left:176.00px;top:171.08px;font-size:15.5px;line-height:15.5px;letter-spacing:0.736px;color:#000;">Debug</span>
<span class="t" style="left:236.60px;top:171.08px;font-size:15.5px;line-height:15.5px;letter-spacing:0.641px;color:#000;">Tools</span>
<span class="t" style="left:286.50px;top:171.08px;font-size:15.5px;line-height:15.5px;letter-spacing:1.214px;color:#000;">Help</span>
<span class="t" style="left:246.80px;top:194.88px;font-size:15.5px;line-height:15.5px;letter-spacing:0.471px;color:#000;">MetaDes</span>
<span class="t" style="left:61.70px;top:228.98px;font-size:15.5px;line-height:15.5px;letter-spacing:0.282px;color:#000;">Person</span>
<span class="t" style="left:81.50px;top:251.98px;font-size:15.5px;line-height:15.5px;letter-spacing:0.649px;color:#000;">name</span>
<span class="t" style="left:82.50px;top:274.98px;font-size:15.5px;line-height:15.5px;letter-spacing:0.530px;color:#000;">age</span>
<span class="t" style="left:82.30px;top:297.98px;font-size:15.5px;line-height:15.5px;letter-spacing:-0.235px;color:#000;">sex</span>
<span class="t" style="left:82.50px;top:320.98px;font-size:15.5px;line-height:15.5px;letter-spacing:1.468px;color:#000;">job</span>
<span class="t" style="left:82.30px;top:343.98px;font-size:15.5px;line-height:15.5px;letter-spacing:0.323px;color:#000;">actions</span>
<span class="t" style="left:82.30px;top:366.98px;font-size:15.5px;line-height:15.5px;letter-spacing:0.425px;color:#000;">Child</span>
<span class="t" style="left:325.30px;top:240.68px;font-size:15.5px;line-height:15.5px;letter-spacing:0.232px;color:#000;">BaseAttrs</span>
<span class="t" style="left:403.50px;top:240.68px;font-size:15.5px;line-height:15.5px;letter-spacing:-0.253px;color:#000;">XMLJSON</span>
<span class="t" style="left:484.00px;top:270.68px;font-size:15.5px;line-height:15.5px;letter-spacing:0.625px;color:#000;">Name</span>
<span class="t" style="left:536.00px;top:270.68px;font-size:15.5px;line-height:15.5px;letter-spacing:0.182px;color:#000;">Person</span>
<span class="t" style="left:488.00px;top:301.58px;font-size:15.5px;line-height:15.5px;letter-spacing:0.280px;color:#000;">Label</span>
<span class="t" style="left:536.00px;top:301.58px;font-size:15.5px;line-height:15.5px;letter-spacing:0.182px;color:#000;">Person</span>
<span class="t" style="left:442.00px;top:335.08px;font-size:15.5px;line-height:15.5px;letter-spacing:0.597px;color:#000;">Descriptors</span>
<span class="t" style="left:535.60px;top:335.08px;font-size:15.5px;line-height:15.5px;letter-spacing:0.641px;color:#000;">xworker.lang.MetaDescriptor3</span>
<span class="t" style="left:469.70px;top:369.88px;font-size:15.5px;line-height:15.5px;letter-spacing:0.107px;color:#000;">Extends</span>
<span class="t" style="left:326.40px;top:402.68px;font-size:15.5px;line-height:15.5px;letter-spacing:0.499px;color:#000;">Find child nodes to exclude</span>
<span class="t" style="left:486.70px;top:430.88px;font-size:15.5px;line-height:15.5px;letter-spacing:0.583px;color:#000;">Many</span>
<span class="t" style="left:467.40px;top:458.88px;font-size:15.5px;line-height:15.5px;letter-spacing:0.176px;color:#000;">EditCols</span>
<span class="t" style="left:536.30px;top:458.88px;font-size:15.5px;line-height:15.5px;letter-spacing:0.500px;color:#000;">2</span>
<span class="t" style="left:448.60px;top:488.68px;font-size:15.5px;line-height:15.5px;letter-spacing:0.410px;color:#000;">Form Style</span>
<span class="t" style="left:439.60px;top:516.88px;font-size:15.5px;line-height:15.5px;letter-spacing:0.510px;color:#000;">Initialization</span>
<span class="t" style="left:481.00px;top:544.78px;font-size:15.5px;line-height:15.5px;letter-spacing:0.785px;color:#000;">Group</span>
<span class="t" style="left:463.80px;top:574.88px;font-size:15.5px;line-height:15.5px;letter-spacing:1.119px;color:#000;">Modifier</span>
<span class="t" style="left:535.50px;top:574.88px;font-size:15.5px;line-height:15.5px;letter-spacing:0.910px;color:#000;">pulbic</span>
<span class="t" style="left:392.00px;top:602.68px;font-size:15.5px;line-height:15.5px;letter-spacing:0.590px;color:#000;">ExtendDescription</span>
<span class="t" style="left:426.40px;top:630.88px;font-size:15.5px;line-height:15.5px;letter-spacing:1.099px;color:#000;">ModifyAction</span>
<span class="t" style="left:328.40px;top:708.68px;font-size:15.5px;line-height:15.5px;letter-spacing:0.418px;color:#000;">Add Child(A)</span>
<span class="t" style="left:436.40px;top:708.68px;font-size:15.5px;line-height:15.5px;letter-spacing:0.294px;color:#000;">ViewMark(V)</span>
<span class="t" style="left:542.70px;top:708.68px;font-size:15.5px;line-height:15.5px;letter-spacing:0.764px;color:#000;">Mark(M)</span>
<span class="t" style="left:620.50px;top:708.68px;font-size:15.5px;line-height:15.5px;letter-spacing:0.194px;color:#000;">Command(C)</span>
<span class="t" style="left:730.50px;top:708.68px;font-size:15.5px;line-height:15.5px;letter-spacing:0.253px;color:#000;">XML Editor(X)</span>
<span class="t" style="left:846.40px;top:708.68px;font-size:15.5px;line-height:15.5px;letter-spacing:-0.011px;color:#000;">Guide(G)</span>
<span class="t" style="left:925.60px;top:708.68px;font-size:15.5px;line-height:15.5px;letter-spacing:-0.572px;color:#000;">Save(S)</span>
</body></html>
